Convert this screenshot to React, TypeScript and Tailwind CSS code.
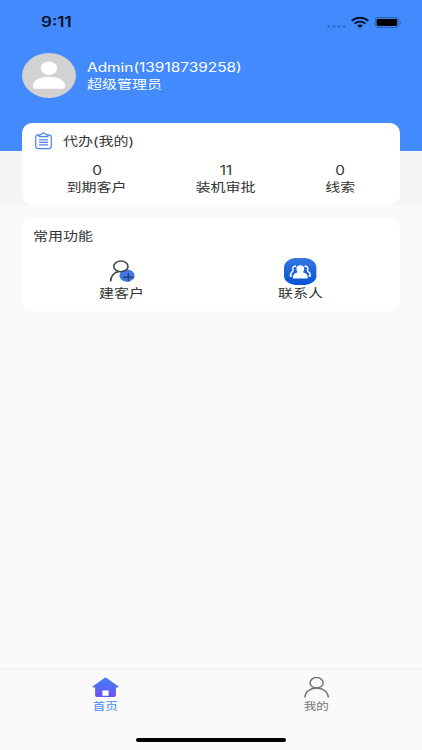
import type { ReactNode } from 'react';

const FONT = "font-['Inter','Noto_Sans_CJK_SC',sans-serif]";

const stats = [
  { label: '到期客户', value: '0', width: 'w-[60px]' },
  { label: '装机审批', value: '11', width: 'w-[60px]' },
  { label: '线索', value: '0', width: 'w-[30px]' },
];

// Text is set wide: glyphs are stretched horizontally
function Wide({ children, className = '' }: { children: ReactNode; className?: string }) {
  return (
    <span className={`block whitespace-nowrap scale-x-[1.22] ${className}`}>{children}</span>
  );
}

function StatusBar() {
  return (
    <div className="flex h-[44px] items-center justify-between pl-[41px] pr-[20px]">
      <Wide className="origin-left text-[14px] font-semibold leading-[16px] text-[#061226]">
        9:11
      </Wide>
      <div className="flex items-center">
        <svg className="mt-[8px] mr-[5px]" width="19" height="3" viewBox="0 0 19 3" fill="#326ac6">
          <ellipse cx="1.8" cy="1.5" rx="1.6" ry="1.3" />
          <ellipse cx="6.9" cy="1.5" rx="1.6" ry="1.3" />
          <ellipse cx="12" cy="1.5" rx="1.6" ry="1.3" />
          <ellipse cx="17.1" cy="1.5" rx="1.6" ry="1.3" />
        </svg>
        <svg className="mr-[5px]" width="18" height="11" viewBox="0 0 18 11" fill="none" stroke="#03102c">
          <path d="M.6 3.9C5.2 -.3 12.8 -.3 17.4 3.9" strokeWidth="1.9" />
          <path d="M3.6 6.6C6.6 3.9 11.4 3.9 14.4 6.6" strokeWidth="1.8" />
          <path d="M6.1 8.5C7.8 7 10.2 7 11.9 8.5L9 10.9Z" fill="#03102c" stroke="none" />
        </svg>
        <svg width="28" height="11" viewBox="0 0 28 11">
          <rect x="1.1" y=".6" width="23.8" height="9.8" rx="3" fill="none" stroke="#2b5cae" strokeWidth="1" />
          <rect x="2.6" y="2" width="20.6" height="7" rx="1.4" fill="#000" />
          <path d="M26.2 3.9C27.6 4.3 27.6 6.7 26.2 7.1Z" fill="#2b5cae" />
        </svg>
      </div>
    </div>
  );
}

function Avatar() {
  return (
    <svg width="54" height="45" viewBox="0 0 54 45">
      <ellipse cx="27" cy="22.5" rx="27" ry="22.4" fill="#d2d2d2" />
      <ellipse cx="27" cy="15.3" rx="8.1" ry="6.8" fill="#fff" />
      <path d="M10.8 33C11 27.8 17 23.8 27 23.8S43 27.8 43.2 33C43.2 35 41.8 35.8 39.5 35.8H14.5C12.2 35.8 10.8 35 10.8 33Z" fill="#fff" />
    </svg>
  );
}

function ClipboardIcon() {
  return (
    <svg width="17" height="18" viewBox="0 0 17 18" fill="none" stroke="#4b83f0" strokeWidth="1.2" strokeLinecap="round" strokeLinejoin="round">
      <path d="M4.2 2.9H3.4C1.6 2.9 .7 3.8 .7 5.2V14.3C.7 15.9 1.6 16.7 3.4 16.7H13.6C15.4 16.7 16.3 15.9 16.3 14.3V5.2C16.3 3.8 15.4 2.9 13.6 2.9H12.8" />
      <path d="M4 4.6V3.2L6.6 2.4C7 .3 10 .3 10.4 2.4L13 3.2V4.6Z" />
      <path d="M4.5 7.9H12.5M4.5 10.4H12.5M4.5 12.9H12.5" strokeWidth="1.2" />
    </svg>
  );
}

function AddCustomerIcon() {
  return (
    <svg width="28" height="23" viewBox="0 0 28 23" fill="none">
      <ellipse cx="19" cy="15.6" rx="7.6" ry="6.2" fill="#4178e9" />
      <ellipse cx="12.9" cy="6.4" rx="7.1" ry="5.4" stroke="#454749" strokeWidth="1.6" />
      <path d="M2.6 21.6C2.7 16.3 5.9 12.1 11.1 11.7" stroke="#454749" strokeWidth="1.7" />
      <path d="M15.1 17.3H25.7M20.4 13.1V21.6" stroke="#2c3f6b" strokeWidth="1.4" />
    </svg>
  );
}

function ContactsIcon() {
  return (
    <svg width="33" height="27" viewBox="0 0 33 27">
      <defs>
        <linearGradient id="contacts" x1="0" y1="0" x2="0" y2="1">
          <stop offset="0" stopColor="#3477e3" />
          <stop offset="1" stopColor="#0752d3" />
        </linearGradient>
      </defs>
      <rect x="0" y=".1" width="32.4" height="26.8" rx="11.5" ry="9.5" fill="url(#contacts)" />
      <g fill="none" stroke="#fff" strokeWidth="1.4" strokeLinecap="round">
        <path d="M11.6 8.3C9.3 8 8.3 9.7 8.9 11.4C9.2 12.4 9.4 12.8 8.8 13.2C7.1 14.2 6.5 15.4 6.4 18H7.6" />
        <path d="M21 8.3C23.3 8 24.3 9.7 23.7 11.4C23.4 12.4 23.2 12.8 23.8 13.2C25.5 14.2 26.1 15.4 26.2 18H25" />
      </g>
      <path d="M16.3 7.2C18.9 7.2 20.4 8.9 20.2 11C20.1 12.4 19.5 13.1 19.2 13.7C19.1 14.5 20.2 14.7 21.4 15.3C23.2 16.2 23.7 17.8 23.7 20.4H8.9C8.9 17.8 9.4 16.2 11.2 15.3C12.4 14.7 13.5 14.5 13.4 13.7C13.1 13.1 12.5 12.4 12.4 11C12.2 8.9 13.7 7.2 16.3 7.2Z" fill="#fff" />
    </svg>
  );
}

function HomeIcon() {
  return (
    <svg width="27" height="21" viewBox="0 0 27 21">
      <defs>
        <linearGradient id="home" x1="0" y1="0" x2="0" y2="1">
          <stop offset="0" stopColor="#3f82f7" />
          <stop offset="1" stopColor="#6c51f2" />
        </linearGradient>
      </defs>
      <path d="M12.8 .8Q13.5 .3 14.2 .8L26.2 9.2C26.7 9.9 26.4 10.4 25.7 10.4H23.9V18.2Q23.9 20 22.1 20H4.9Q3.1 20 3.1 18.2V10.4H1.3C.6 10.4 .3 9.9 .8 9.2Z" fill="url(#home)" />
      <rect x="10.4" y="13.4" width="6.2" height="5.3" rx=".5" fill="#fff" />
    </svg>
  );
}

function ProfileIcon() {
  return (
    <svg width="26" height="21" viewBox="0 0 26 21" fill="none" stroke="#6f6f6f" strokeWidth="1.4">
      <ellipse cx="12.6" cy="5.8" rx="6.6" ry="5.2" />
      <path d="M.9 20.4C.9 15 6 11 12.6 11S24.3 15 24.3 20.4" />
    </svg>
  );
}

export default function App() {
  return (
    <div className={`flex h-[750px] w-[422px] flex-col overflow-hidden bg-[#fafafa] text-[12.3px] leading-[17px] text-[#333] ${FONT}`}>
      <header className="h-[151px] shrink-0 bg-[#448aff]">
        <StatusBar />
        <div className="flex items-center gap-[11px] pl-[22px] pt-[9px]">
          <Avatar />
          <div className="text-white">
            <Wide className="origin-left text-[12.65px]">Admin(13918739258)</Wide>
            <Wide className="origin-left">超级管理员</Wide>
          </div>
        </div>
      </header>

      <section className="h-[54px] shrink-0 bg-[#f5f5f5] px-[22px]">
        <div className="relative -mt-[28px] h-[82px] rounded-[10px] bg-white pt-[9px]">
          <div className="flex h-[18px] items-center gap-[11px] pl-[13px]">
            <ClipboardIcon />
            <Wide className="origin-left">代办(我的)</Wide>
          </div>
          <div className="mt-[12px] flex justify-between px-[45px]">
            {stats.map((s) => (
              <div key={s.label} className={`flex flex-col items-center ${s.width}`}>
                <Wide className="text-[12.6px]">{s.value}</Wide>
                <Wide>{s.label}</Wide>
              </div>
            ))}
          </div>
        </div>
      </section>

      <section className="mx-[22px] mt-[13px] h-[93px] rounded-[10px] bg-white pt-[10px]">
        <h2 className="pl-[11px]">
          <Wide className="origin-left">常用功能</Wide>
        </h2>
        <div className="mt-[12px] flex justify-around px-[10px]">
          <div className="flex w-[46px] flex-col items-center">
            <div className="flex h-[28px] items-center">
              <AddCustomerIcon />
            </div>
            <Wide>建客户</Wide>
          </div>
          <div className="flex w-[46px] flex-col items-center">
            <div className="flex h-[28px] items-center">
              <ContactsIcon />
            </div>
            <Wide>联系人</Wide>
          </div>
        </div>
      </section>

      <nav className="mt-auto h-[82px] border-t-2 border-[#f2f2f2]">
        <div className="flex h-[66px] pt-[7px] text-[10.3px] leading-[16px]">
          <div className="flex flex-1 flex-col items-center text-[#448aff]">
            <HomeIcon />
            <Wide>首页</Wide>
          </div>
          <div className="flex flex-1 flex-col items-center text-[#757575]">
            <ProfileIcon />
            <Wide>我的</Wide>
          </div>
        </div>
        <div className="mx-auto mt-[2px] h-[4px] w-[150px] rounded-full bg-black" />
      </nav>
    </div>
  );
}
